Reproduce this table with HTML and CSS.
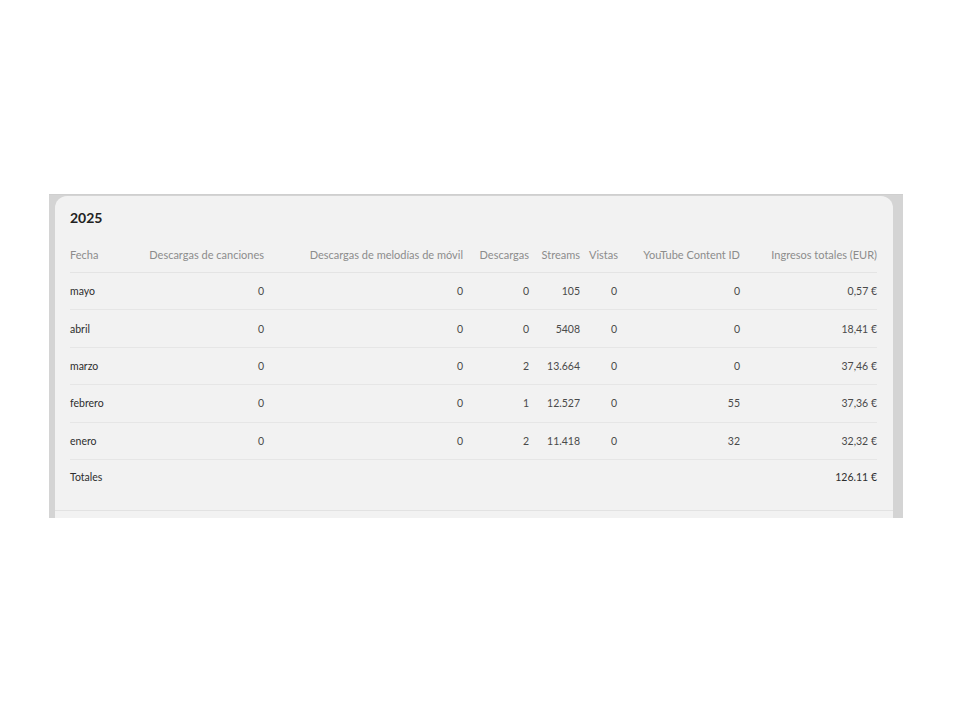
FILE: index.html
```html
<!DOCTYPE html>
<html lang="es">
<head>
<meta charset="utf-8">
<title>2025</title>
<link rel="stylesheet" href="styles.css">
</head>
<body>
<div class="frame">
  <section class="card">
    <h2 class="year">2025</h2>
    <table class="stats">
      <colgroup>
        <col class="c1"><col class="c2"><col class="c3"><col class="c4"><col class="c5"><col class="c6"><col class="c7"><col class="c8">
      </colgroup>
      <thead>
        <tr>
          <th class="left">Fecha</th>
          <th>Descargas de canciones</th>
          <th>Descargas de melodías de móvil</th>
          <th>Descargas</th>
          <th>Streams</th>
          <th>Vistas</th>
          <th>YouTube Content ID</th>
          <th>Ingresos totales (EUR)</th>
        </tr>
      </thead>
      <tbody>
        <tr><td class="left">mayo</td><td>0</td><td>0</td><td>0</td><td>105</td><td class="v">0</td><td>0</td><td>0,57 €</td></tr>
        <tr><td class="left">abril</td><td>0</td><td>0</td><td>0</td><td>5408</td><td class="v">0</td><td>0</td><td>18,41 €</td></tr>
        <tr><td class="left">marzo</td><td>0</td><td>0</td><td>2</td><td>13.664</td><td class="v">0</td><td>0</td><td>37,46 €</td></tr>
        <tr><td class="left">febrero</td><td>0</td><td>0</td><td>1</td><td>12.527</td><td class="v">0</td><td>55</td><td>37,36 €</td></tr>
        <tr><td class="left">enero</td><td>0</td><td>0</td><td>2</td><td>11.418</td><td class="v">0</td><td>32</td><td>32,32 €</td></tr>
        <tr class="total"><td class="left">Totales</td><td></td><td></td><td></td><td></td><td></td><td></td><td>126.11 €</td></tr>
      </tbody>
    </table>
  </section>
  <div class="next"></div>
</div>
</body>
</html>
```

FILE: styles.css
```css
html, body {
  margin: 0;
  padding: 0;
  background: #ffffff;
}

body {
  font-family: Lato, "Open Sans", "Liberation Sans", sans-serif;
}

.frame {
  margin: 194px 0 0 49px;
  width: 854px;
  height: 324px;
  background: #d4d4d4;
  padding: 1px 10px 0 6px;
  box-sizing: border-box;
  border-top: 1px solid #cfcfcf;
  display: flex;
  flex-direction: column;
}

.card {
  background: #f2f2f2;
  border-radius: 12px 12px 0 0;
  padding: 12px 15px 0 15px;
  height: 315px;
  box-sizing: border-box;
  border-bottom: 1px solid #e2e2e2;
}

.next {
  flex: 1;
  background: #f2f2f2;
}

.year {
  margin: 0;
  font-size: 14px;
  line-height: 20px;
  font-weight: 700;
  color: #222;
}

.stats {
  margin-top: 9px;
  width: 807px;
  border-collapse: collapse;
  table-layout: fixed;
  font-size: 10.5px;
}

.c1 { width: 68px; }
.c2 { width: 126px; }
.c3 { width: 199px; }
.c4 { width: 66px; }
.c5 { width: 51px; }
.c6 { width: 38px; }
.c7 { width: 122px; }
.c8 { width: 137px; }

.stats th {
  font-weight: 400;
  font-size: 11px;
  color: #8c8c8c;
  text-align: right;
  height: 35px;
  padding: 0;
  white-space: nowrap;
  border-bottom: 1px solid #e4e4e4;
}

.stats td {
  text-align: right;
  color: #4a4a4a;
  height: 36.4px;
  padding: 0;
  white-space: nowrap;
  border-bottom: 1px solid #e6e6e6;
}

.stats td.v {
  padding-right: 1px;
}

.stats .left {
  text-align: left;
}

.stats td.left {
  color: #2e2e2e;
}

.stats tr.total td {
  border-bottom: none;
  color: #2e2e2e;
  height: 34px;
}
```
